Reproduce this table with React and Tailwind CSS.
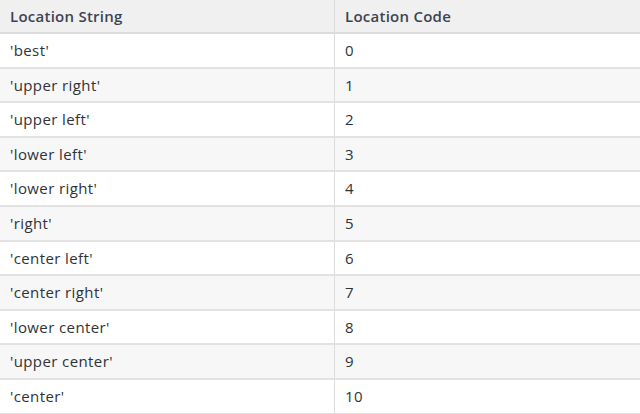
const rows = [
  ["'best'", '0'],
  ["'upper right'", '1'],
  ["'upper left'", '2'],
  ["'lower left'", '3'],
  ["'lower right'", '4'],
  ["'right'", '5'],
  ["'center left'", '6'],
  ["'center right'", '7'],
  ["'lower center'", '8'],
  ["'upper center'", '9'],
  ["'center'", '10'],
];

export default function App() {
  return (
    <div className="w-[640px] h-[414px] overflow-hidden bg-white font-['Open_Sans',sans-serif] text-[15px] text-[#2f3338]">
      <div className="grid grid-cols-[335px_1fr] h-[34px] bg-[#f0f0f0] border-b-2 border-[#dcdcdc] tracking-[0.25px]">
        <div className="pl-[10px] flex items-center font-semibold text-[#3d4450] border-r border-[#dcdcdc]">Location String</div>
        <div className="pl-[10px] flex items-center font-semibold text-[#3d4450]">Location Code</div>
      </div>
      {rows.map(([s, c], i) => (
        <div
          key={s}
          className={`grid grid-cols-[335px_1fr] h-[34.6px] border-b-2 border-[#e2e2e2] tracking-[0.4px] ${i % 2 === 1 ? 'bg-[#f7f7f7]' : 'bg-white'}`}
        >
          <div className="pl-[10px] flex items-center font-medium border-r border-[#dcdcdc]">{s}</div>
          <div className="pl-[10px] flex items-center font-medium">{c}</div>
        </div>
      ))}
    </div>
  );
}
